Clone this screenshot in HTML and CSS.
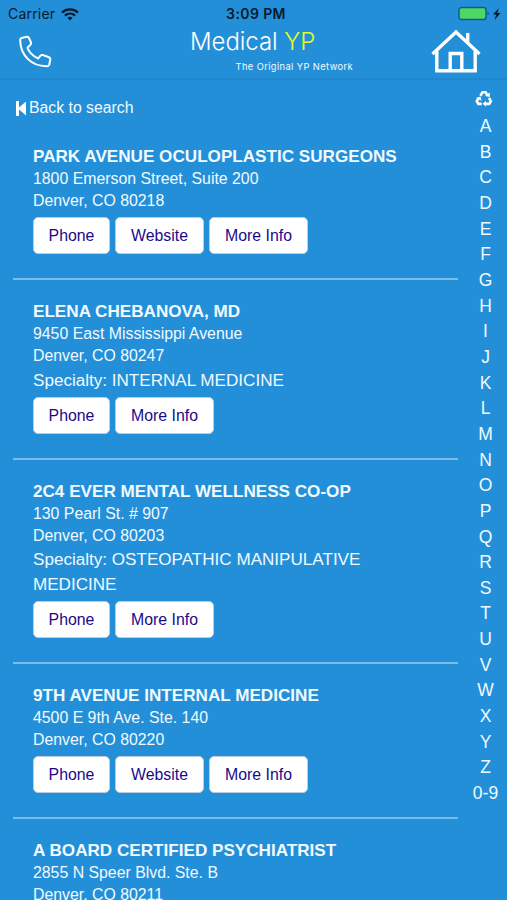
FILE: index.html
```html
<!DOCTYPE html>
<html lang="en">
<head>
<meta charset="utf-8">
<title>Medical YP</title>
<link rel="stylesheet" href="styles.css">
</head>
<body>
<div class="app">
  <header class="header">
    <div class="status">
      <div class="carrier"><span class="carrier-name">Carrier</span>
        <svg class="wifi" width="18" height="13" viewBox="0 0 18 13" fill="none" stroke="#051b2b" stroke-width="2.3"><path d="M1 4.6C5.5.4 12.5.4 17 4.6M3.9 7.6c3-2.7 7.2-2.7 10.2 0"/><path d="M9 12.4 6.3 9.8c1.5-1.3 3.9-1.3 5.4 0z" fill="#051b2b" stroke="none"/></svg>
      </div>
      <div class="time">3:09 PM</div>
      <div class="power">
        <svg width="49" height="16" viewBox="0 0 49 16"><rect x="1" y="1.500" width="27" height="12" rx="2.500" fill="#4bd964" stroke="#12598f" stroke-width="1.400"/><path d="M29.500 5.500q3 2 0 4z" fill="#12598f"/><path d="m41 2-6 6.500h3.200L36.500 14l6-7h-3.300z" fill="#051b2b"/></svg>
      </div>
    </div>
    <div class="brandbar">
      <svg class="call" width="34" height="34" viewBox="0 0 34 34" fill="none" stroke="#fff" stroke-width="2" stroke-linejoin="round"><path d="M3.500 3 9 1.800q1.400-.1 1.900 1L13 7.500q.5 1.300-.6 2.300L9.500 12.700q2 6.500 10.700 10.800l2.300-2.900q1-1 2.300-.6l6.200 2.200q1.500.6 1.300 2l-1 5.300q-.5 1.800-2.200 1.700C13 31.500 2.500 20 2.200 5.500Q2 3.500 3.500 3z"/></svg>
      <div class="brand">
        <div class="brand-name">Medical <span class="yp">YP</span></div>
        <div class="tagline">The Original YP Network</div>
      </div>
      <svg class="home" width="50" height="44" viewBox="0 0 50 44" fill="none" stroke="#fff" stroke-width="3.400"><path d="m1.500 25 23.500-22 23.500 22M5.800 21v20.800h38.400V21M19.200 41V24.500h11.600V41M36.700 13V4"/></svg>
    </div>
  </header>
  <div class="content">
    <main class="results">
      <a class="back"><svg width="12" height="15" viewBox="0 0 12 15" fill="#fff"><path d="M0 0h3v6.500L10 .5v14L3 8.500V15H0z"/></svg><span>Back to search</span></a>
      <section class="entry"><h2>PARK AVENUE OCULOPLASTIC SURGEONS</h2><p>1800 Emerson Street, Suite 200</p><p>Denver, CO 80218</p><div class="actions"><a>Phone</a><a class="web">Website</a><a class="info">More Info</a></div></section>
      <section class="entry"><h2>ELENA CHEBANOVA, MD</h2><p>9450 East Mississippi Avenue</p><p>Denver, CO 80247</p><p class="specialty">Specialty: INTERNAL MEDICINE</p><div class="actions"><a>Phone</a><a class="info">More Info</a></div></section>
      <section class="entry"><h2>2C4 EVER MENTAL WELLNESS CO-OP</h2><p>130 Pearl St. # 907</p><p>Denver, CO 80203</p><p class="specialty">Specialty: OSTEOPATHIC MANIPULATIVE<br>MEDICINE</p><div class="actions"><a>Phone</a><a class="info">More Info</a></div></section>
      <section class="entry"><h2>9TH AVENUE INTERNAL MEDICINE</h2><p>4500 E 9th Ave. Ste. 140</p><p>Denver, CO 80220</p><div class="actions"><a>Phone</a><a class="web">Website</a><a class="info">More Info</a></div></section>
      <section class="entry"><h2>A BOARD CERTIFIED PSYCHIATRIST</h2><p>2855 N Speer Blvd. Ste. B</p><p>Denver, CO 80211</p></section>
    </main>
    <nav class="index">
      <svg class="recycle" width="18" height="17" viewBox="0 0 18 17" fill="none" stroke="#fff" stroke-width="2.600"><path d="M5.300 5.800 7.600 2.200h3l1.700 3M14 8l1.900 3.200-1.700 2.700h-4M6.700 13.900H3.400l-1.600-2.700 1.700-3"/><path d="m10 5.900 4.800 1-.1-4.300zM11 10.700v5.900l-3.500-2.900zM1 8l4.600-1.400.9 4.200z" fill="#fff" stroke="none"/></svg>
      <a>A</a><a>B</a><a>C</a><a>D</a><a>E</a><a>F</a><a>G</a><a>H</a><a>I</a><a>J</a><a>K</a><a>L</a><a>M</a><a>N</a><a>O</a><a>P</a><a>Q</a><a>R</a><a>S</a><a>T</a><a>U</a><a>V</a><a>W</a><a>X</a><a>Y</a><a>Z</a><a>0-9</a>
    </nav>
  </div>
</div>
</body>
</html>
```
FILE: styles.css
```css
* { box-sizing: border-box; }
body { margin: 0; background: #248fd9; color: #f0faff; font-family: "Liberation Sans", Arial, sans-serif; }
.app { width: 507px; height: 900px; overflow: hidden; }
.header { height: 80px; border-bottom: 2px solid #2188cf; }
.status { display: grid; grid-template-columns: 1fr 80px 1fr; height: 27px; color: #051b2b; font: 14px/27px Inter, sans-serif; }
.carrier { display: flex; align-items: center; gap: 6px; padding-left: 8px; }
.carrier-name { letter-spacing: .2px; line-height: 26px; }
.time { padding-left: 5px; text-align: center; font-weight: 600; font-size: 14px; line-height: 28px; letter-spacing: .4px; white-space: nowrap; }
.power { display: flex; justify-content: flex-end; align-items: center; }
.brandbar { display: flex; height: 51px; }
.call { margin: 8px 0 0 18px; }
.brand { margin-left: 138px; width: 163px; }
.brand-name { font: 300 24px/30px Inter, sans-serif; letter-spacing: -.05px; color: #fff; white-space: nowrap; }
.yp { color: #e5fb22; }
.tagline { margin-top: 4px; text-align: right; font: 9.300px/12px Inter, sans-serif; letter-spacing: .4px; white-space: nowrap; }
.home { margin: 2px 0 0 78px; }
.content { display: flex; justify-content: space-between; }
.results { width: 445px; margin-left: 13px; padding-top: 18px; }
.back { display: flex; align-items: center; height: 20px; padding-left: 3px; gap: 1px; font-size: 15.800px; }
.back svg { flex: none; }
.entry { padding: 20px 0 24px 20px; border-bottom: 2px solid #7dbbe8; }
.entry:nth-child(2) { padding-top: 27px; }
.entry:last-child { border: 0; padding-bottom: 0; }
h2 { margin: 0; height: 23px; font-size: 17.120px; line-height: 24px; white-space: nowrap; }
p { margin: 0; font-size: 15.850px; line-height: 22px; white-space: nowrap; }
.specialty { margin: 1.500px 0 -1.500px; font-size: 17.080px; line-height: 24.500px; }
.actions { display: flex; gap: 5px; margin-top: 5px; }
.actions a { width: 77px; height: 37px; border: 1px solid #b9cfdf; border-radius: 5px; background: #fff; color: #1a0a8a; font-size: 15.850px; line-height: 35px; text-align: center; }
.actions .web { width: 89px; }
.actions .info { width: 99px; }
.index { width: 43px; display: flex; flex-direction: column; align-items: center; padding-top: 10px; }
.recycle { margin: 0 4px 7px 0; flex: none; }
.index a { font-size: 17.500px; line-height: 25.650px; flex: none; }
```
